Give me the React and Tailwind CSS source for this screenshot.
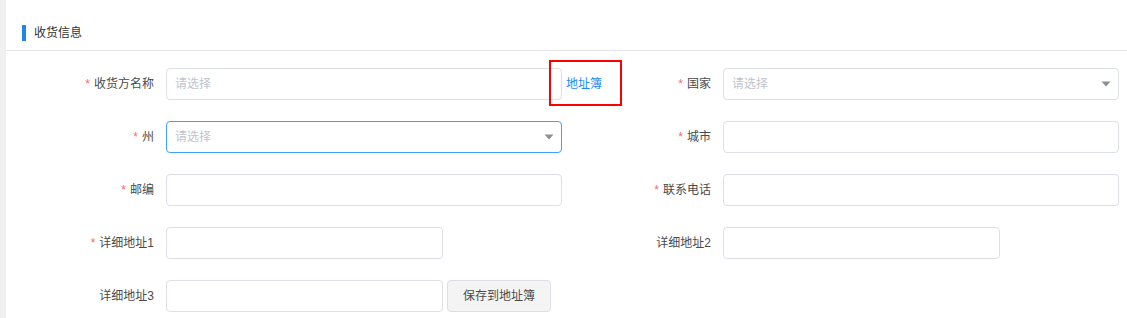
import React from "react";

const font = { fontFamily: '"Liberation Sans", "Noto Sans CJK SC", sans-serif' };

function Caret() {
  return (
    <svg width="10" height="6" viewBox="0 0 10 6" className="absolute right-[7px] top-1/2 -translate-y-1/2">
      <path d="M0.5 0.5 L9.5 0.5 L5 5.5 Z" fill="#8c8f96" />
    </svg>
  );
}

function Label({ req, children }) {
  return (
    <div className="w-[160px] shrink-0 pr-[12px] flex items-center justify-end text-[12px] text-[#4a4a4a]">
      {req && <span className="text-[#f56c6c] mr-[4px] text-[12px]">*</span>}
      <span>{children}</span>
    </div>
  );
}

function Input({ w = "w-[396px]", placeholder, select, focused }) {
  return (
    <div
      className={`${w} h-[32px] relative rounded-[4px] border ${
        focused ? "border-[#409eff]" : "border-[#dcdfe6]"
      } bg-white flex items-center pl-[8px] text-[12px] text-[#c0c4cc]`}
    >
      {placeholder}
      {select && <Caret />}
    </div>
  );
}

export default function App() {
  return (
    <div className="w-[1127px] h-[318px] flex bg-white overflow-hidden" style={font}>
      <div className="w-[6px] bg-[#f0f0f0] shrink-0" />
      <div className="flex-1 flex flex-col">
        <div className="h-[51px] border-b border-[#e4e4e4] flex pt-[25px] pl-[16px]">
          <div className="w-[4px] h-[16px] bg-[#1e88e5] mr-[8px]" />
          <div className="text-[12px] leading-[16px] text-[#333]">收货信息</div>
        </div>
        <div className="flex flex-col gap-[21px] pt-[17px]">
          <div className="flex">
            <div className="w-[557px] flex">
              <Label req>收货方名称</Label>
              <div className="relative">
                <Input placeholder="请选择" />
                <div className="absolute left-[400px] top-0 h-[32px] flex items-center text-[12px] text-[#1989fa] whitespace-nowrap">
                  地址簿
                </div>
                <div className="absolute left-[383px] top-[-8px] w-[73px] h-[46px] border-2 border-[#ff0000]" />
              </div>
            </div>
            <div className="flex">
              <Label req>国家</Label>
              <Input placeholder="请选择" select />
            </div>
          </div>
          <div className="flex">
            <div className="w-[557px] flex">
              <Label req>州</Label>
              <Input placeholder="请选择" select focused />
            </div>
            <div className="flex">
              <Label req>城市</Label>
              <Input />
            </div>
          </div>
          <div className="flex">
            <div className="w-[557px] flex">
              <Label req>邮编</Label>
              <Input />
            </div>
            <div className="flex">
              <Label req>联系电话</Label>
              <Input />
            </div>
          </div>
          <div className="flex">
            <div className="w-[557px] flex">
              <Label req>详细地址1</Label>
              <Input w="w-[277px]" />
            </div>
            <div className="flex">
              <Label>详细地址2</Label>
              <Input w="w-[277px]" />
            </div>
          </div>
          <div className="flex">
            <div className="w-[557px] flex">
              <Label>详细地址3</Label>
              <Input w="w-[277px]" />
              <button className="ml-[4px] w-[104px] h-[32px] rounded-[4px] border border-[#dcdfe6] bg-[#f4f4f5] text-[12px] text-[#4a4a4a]">
                保存到地址簿
              </button>
            </div>
          </div>
        </div>
      </div>
    </div>
  );
}
